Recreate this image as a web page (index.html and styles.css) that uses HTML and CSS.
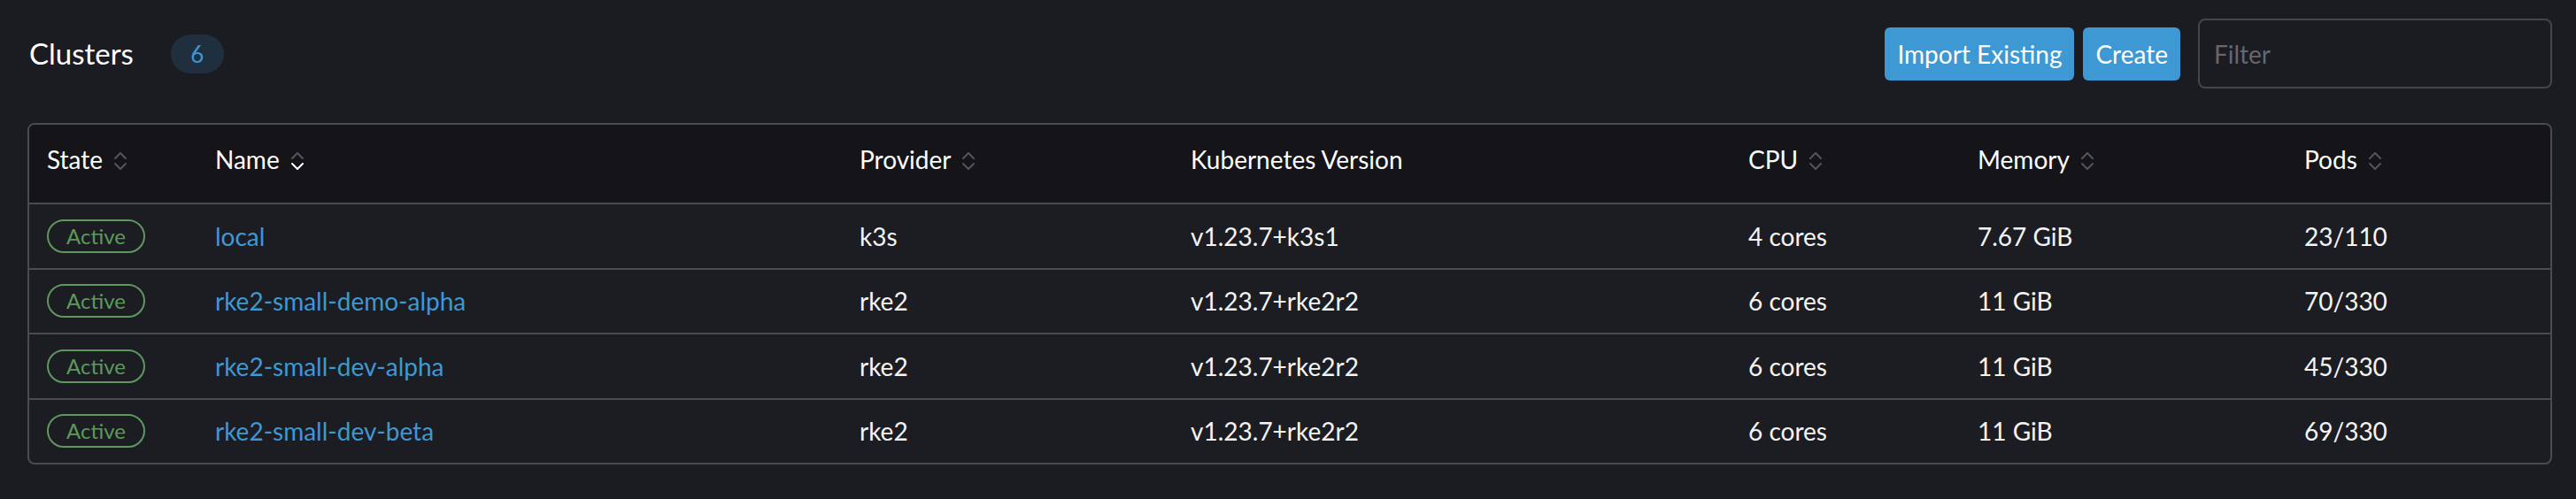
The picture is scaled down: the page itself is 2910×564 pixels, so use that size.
FILE: index.html
```html
<!DOCTYPE html>
<html lang="en">
<head>
<meta charset="utf-8">
<title>Clusters</title>
<link rel="stylesheet" href="styles.css">
</head>
<body>
<div class="page">
  <header class="top">
    <div class="title">
      <h1>Clusters</h1>
      <span class="count">6</span>
    </div>
    <div class="actions">
      <button class="btn">Import Existing</button>
      <button class="btn">Create</button>
      <input class="filter" type="text" placeholder="Filter">
    </div>
  </header>

  <div class="table-wrap">
    <table class="grid">
      <colgroup>
        <col class="c-state"><col class="c-name"><col class="c-prov"><col class="c-ver"><col class="c-cpu"><col class="c-mem"><col class="c-pods">
      </colgroup>
      <thead>
        <tr>
          <th><span class="th">State<svg class="sort" viewBox="0 0 16 22"><polyline class="up" points="2,8 8,2 14,8"/><polyline class="down" points="2,14 8,20 14,14"/></svg></span></th>
          <th><span class="th">Name<svg class="sort sorted" viewBox="0 0 16 22"><polyline class="up" points="2,8 8,2 14,8"/><polyline class="down" points="2,14 8,20 14,14"/></svg></span></th>
          <th><span class="th">Provider<svg class="sort" viewBox="0 0 16 22"><polyline class="up" points="2,8 8,2 14,8"/><polyline class="down" points="2,14 8,20 14,14"/></svg></span></th>
          <th><span class="th">Kubernetes Version</span></th>
          <th><span class="th">CPU<svg class="sort" viewBox="0 0 16 22"><polyline class="up" points="2,8 8,2 14,8"/><polyline class="down" points="2,14 8,20 14,14"/></svg></span></th>
          <th><span class="th">Memory<svg class="sort" viewBox="0 0 16 22"><polyline class="up" points="2,8 8,2 14,8"/><polyline class="down" points="2,14 8,20 14,14"/></svg></span></th>
          <th><span class="th">Pods<svg class="sort" viewBox="0 0 16 22"><polyline class="up" points="2,8 8,2 14,8"/><polyline class="down" points="2,14 8,20 14,14"/></svg></span></th>
        </tr>
      </thead>
      <tbody>
        <tr>
          <td><span class="state">Active</span></td>
          <td><a class="link" href="#">local</a></td>
          <td>k3s</td>
          <td>v1.23.7+k3s1</td>
          <td>4 cores</td>
          <td>7.67 GiB</td>
          <td>23/110</td>
        </tr>
        <tr>
          <td><span class="state">Active</span></td>
          <td><a class="link" href="#">rke2-small-demo-alpha</a></td>
          <td>rke2</td>
          <td>v1.23.7+rke2r2</td>
          <td>6 cores</td>
          <td>11 GiB</td>
          <td>70/330</td>
        </tr>
        <tr>
          <td><span class="state">Active</span></td>
          <td><a class="link" href="#">rke2-small-dev-alpha</a></td>
          <td>rke2</td>
          <td>v1.23.7+rke2r2</td>
          <td>6 cores</td>
          <td>11 GiB</td>
          <td>45/330</td>
        </tr>
        <tr>
          <td><span class="state">Active</span></td>
          <td><a class="link" href="#">rke2-small-dev-beta</a></td>
          <td>rke2</td>
          <td>v1.23.7+rke2r2</td>
          <td>6 cores</td>
          <td>11 GiB</td>
          <td>69/330</td>
        </tr>
      </tbody>
    </table>
  </div>
</div>
</body>
</html>
```

FILE: styles.css
```css
html, body {
  margin: 0;
  padding: 0;
  background: #1b1c21;
}

body {
  font-family: Lato, "Open Sans", "Liberation Sans", sans-serif;
  font-size: 28px;
  color: #f4f4f5;
}

.page {
  padding: 21px 27px 0 31px;
}

.top {
  display: flex;
  align-items: center;
  justify-content: space-between;
  height: 79px;
  margin-bottom: 39px;
}

.title {
  display: flex;
  align-items: center;
  gap: 42px;
  padding-left: 2px;
}

.title h1 {
  margin: 0;
  font-size: 33px;
  font-weight: 400;
  color: #ffffff;
  line-height: 1;
}

.count {
  display: inline-flex;
  align-items: center;
  justify-content: center;
  width: 60px;
  height: 44px;
  border-radius: 22px;
  background: #1f2f3e;
  color: #3d98d3;
  font-size: 26px;
}

.actions {
  display: flex;
  align-items: center;
}

.btn {
  height: 60px;
  padding: 0 14px;
  margin-right: 10px;
  border: none;
  border-radius: 6px;
  background: #3d98d3;
  color: #ffffff;
  font-family: inherit;
  font-size: 28px;
  line-height: 60px;
}

.btn + .btn {
  margin-right: 20px;
}

.filter {
  box-sizing: border-box;
  width: 400px;
  height: 79px;
  padding: 0 16px;
  border: 2px solid #45464c;
  border-radius: 8px;
  background: #1b1c21;
  color: #f4f4f5;
  font-family: inherit;
  font-size: 28px;
  outline: none;
}

.filter::placeholder {
  color: #66676d;
}

.table-wrap {
  border: 2px solid #4a4b51;
  border-radius: 8px;
  overflow: hidden;
  background: #1c1d22;
}

.grid {
  width: 100%;
  border-collapse: separate;
  border-spacing: 0;
  table-layout: fixed;
}

.c-state { width: 190px; }
.c-name { width: 728px; }
.c-prov { width: 374px; }
.c-ver { width: 630px; }
.c-cpu { width: 259px; }
.c-mem { width: 369px; }
.c-pods { width: 298px; }

.grid th {
  height: 88px;
  box-sizing: border-box;
  padding: 0 0 10px 20px;
  background: #141419;
  text-align: left;
  font-weight: 400;
  color: #ffffff;
  vertical-align: middle;
  white-space: nowrap;
}

.th {
  display: inline-flex;
  align-items: center;
}

.sort {
  width: 16px;
  height: 22px;
  margin-left: 12px;
  margin-top: 4px;
  fill: none;
  stroke-width: 2;
  stroke-linecap: round;
  stroke-linejoin: round;
}

.sort .up,
.sort .down {
  stroke: #55565c;
}

.sort.sorted .down {
  stroke: #ffffff;
}

.grid td {
  height: 73.5px;
  box-sizing: border-box;
  padding: 0 0 0 20px;
  border-top: 2px solid #4a4b51;
  vertical-align: middle;
  white-space: nowrap;
  color: #f4f4f5;
}

.link {
  color: #3d98d3;
  text-decoration: none;
}

.state {
  display: inline-block;
  box-sizing: border-box;
  height: 38px;
  padding: 0 20px;
  border: 2px solid #5d995d;
  border-radius: 19px;
  color: #5d995d;
  font-size: 24px;
  line-height: 34px;
}
```
